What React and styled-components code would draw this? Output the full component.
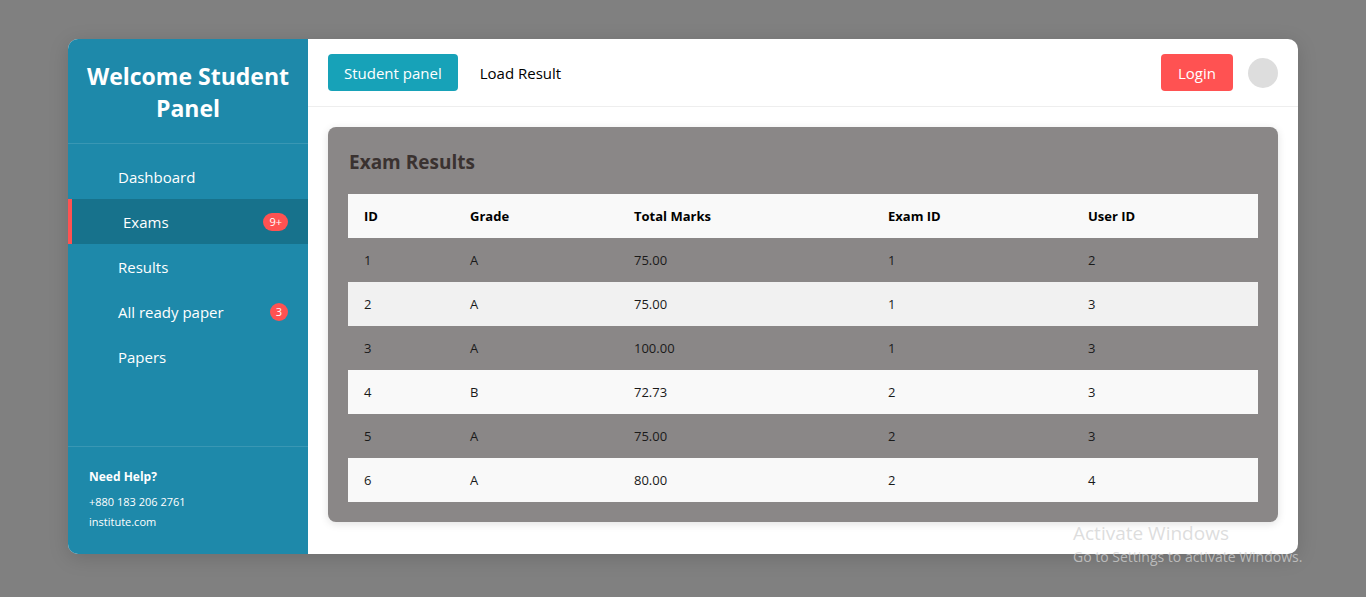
import React from 'react';
import styled, { createGlobalStyle } from 'styled-components';

const GlobalStyle = createGlobalStyle`
  * { box-sizing: border-box; }
  body {
    margin: 0;
    background: #808080;
    font-family: "Open Sans", "Noto Sans", sans-serif;
  }
`;

const Page = styled.div`
  position: relative;
  height: 597px;
  padding: 39px 68px 0;
`;

const Card = styled.div`
  display: flex;
  height: 515px;
  border-radius: 10px;
  overflow: hidden;
  background: #fff;
  box-shadow: 0 4px 20px rgba(0, 0, 0, 0.15);
`;

const Sidebar = styled.aside`
  display: flex;
  flex-direction: column;
  width: 240px;
  background: #1e89aa;
  color: #fff;
`;

const Title = styled.h1`
  margin: 0;
  padding: 21px 16px 19px;
  font-size: 23px;
  line-height: 32px;
  font-weight: 700;
  text-align: center;
  border-bottom: 1px solid rgba(255, 255, 255, 0.12);
`;

const Menu = styled.nav`
  display: flex;
  flex-direction: column;
  padding-top: 10px;
  flex: 1;
`;

const MenuItem = styled.div`
  display: flex;
  align-items: center;
  justify-content: space-between;
  height: 45px;
  padding: 0 20px 0 ${p => (p.$active ? '51px' : '50px')};
  font-size: 15px;
  background: ${p => (p.$active ? '#17728c' : 'transparent')};
  border-left: ${p => (p.$active ? '4px solid #ff5252' : '0')};
`;

const Badge = styled.span`
  display: inline-flex;
  align-items: center;
  justify-content: center;
  min-width: 18px;
  height: 18px;
  padding: 0 6px;
  border-radius: 9px;
  background: #ff5252;
  font-size: 11px;
  color: #fff;
`;

const Help = styled.div`
  padding: 20px 20px 22px 21px;
  border-top: 1px solid rgba(255, 255, 255, 0.12);
  font-size: 11px;
  line-height: 20px;
`;

const HelpTitle = styled.div`
  font-size: 12px;
  font-weight: 700;
  margin-bottom: 5px;
`;

const Main = styled.main`
  flex: 1;
  display: flex;
  flex-direction: column;
`;

const Header = styled.header`
  display: flex;
  align-items: center;
  height: 68px;
  padding: 0 20px;
  border-bottom: 1px solid #eeeeee;
`;

const NavButton = styled.button`
  height: 37px;
  padding: 0 16px;
  border: 0;
  border-radius: 4px;
  font-family: inherit;
  font-size: 15px;
  color: ${p => (p.$primary ? '#fff' : '#000')};
  background: ${p => (p.$primary ? '#17a2b8' : 'transparent')};
  margin-right: 6px;
`;

const Spacer = styled.div`
  flex: 1;
`;

const LoginButton = styled.button`
  height: 37px;
  width: 72px;
  border: 0;
  border-radius: 4px;
  background: #ff5252;
  color: #fff;
  font-family: inherit;
  font-size: 15px;
`;

const Avatar = styled.div`
  width: 30px;
  height: 30px;
  margin-left: 15px;
  border-radius: 50%;
  background: #dddddd;
`;

const Content = styled.section`
  padding: 20px;
`;

const Panel = styled.div`
  padding: 20px;
  border-radius: 8px;
  background: #8a8787;
  box-shadow: 0 2px 8px rgba(0, 0, 0, 0.12);
`;

const PanelTitle = styled.h2`
  margin: 0 0 20px 1px;
  height: 27px;
  font-size: 19px;
  font-weight: 700;
  color: #3a3230;
  line-height: 30px;
`;

const Table = styled.table`
  width: 100%;
  border-collapse: collapse;
  font-size: 13px;
  color: #1a1a1a;
`;

const Row = styled.tr`
  height: 44px;
  background: ${p => p.$bg || 'transparent'};
`;

const Th = styled.th`
  text-align: left;
  font-weight: 700;
  padding: 0 16px;
  color: #000;
`;

const Td = styled.td`
  padding: 0 16px;
`;

const Watermark = styled.div`
  position: absolute;
  left: 1073px;
  top: 521px;
  color: rgba(210, 210, 210, 0.75);
  font-family: "Open Sans", sans-serif;
  pointer-events: none;
`;

const WatermarkTitle = styled.div`
  font-size: 19px;
  line-height: 25px;
`;

const WatermarkSub = styled.div`
  font-size: 14px;
  line-height: 22px;
`;

const rows = [
  ['1', 'A', '75.00', '1', '2'],
  ['2', 'A', '75.00', '1', '3'],
  ['3', 'A', '100.00', '1', '3'],
  ['4', 'B', '72.73', '2', '3'],
  ['5', 'A', '75.00', '2', '3'],
  ['6', 'A', '80.00', '2', '4'],
];

const rowBg = [null, '#f1f1f1', null, '#f9f9f9', null, '#f9f9f9'];
const widths = [106, 164, 254, 200, 186];

export default function App() {
  return (
    <Page>
      <GlobalStyle />
      <Card>
        <Sidebar>
          <Title>Welcome Student Panel</Title>
          <Menu>
            <MenuItem>Dashboard</MenuItem>
            <MenuItem $active>Exams<Badge>9+</Badge></MenuItem>
            <MenuItem>Results</MenuItem>
            <MenuItem>All ready paper<Badge>3</Badge></MenuItem>
            <MenuItem>Papers</MenuItem>
          </Menu>
          <Help>
            <HelpTitle>Need Help?</HelpTitle>
            <div>+880 183 206 2761</div>
            <div>institute.com</div>
          </Help>
        </Sidebar>
        <Main>
          <Header>
            <NavButton $primary>Student panel</NavButton>
            <NavButton>Load Result</NavButton>
            <Spacer />
            <LoginButton>Login</LoginButton>
            <Avatar />
          </Header>
          <Content>
            <Panel>
              <PanelTitle>Exam Results</PanelTitle>
              <Table>
                <thead>
                  <Row $bg="#f9f9f9">
                    {['ID', 'Grade', 'Total Marks', 'Exam ID', 'User ID'].map((h, i) => (
                      <Th key={h} style={{ width: widths[i] }}>{h}</Th>
                    ))}
                  </Row>
                </thead>
                <tbody>
                  {rows.map((r, i) => (
                    <Row key={i} $bg={rowBg[i]}>
                      {r.map((c, j) => <Td key={j}>{c}</Td>)}
                    </Row>
                  ))}
                </tbody>
              </Table>
            </Panel>
          </Content>
        </Main>
      </Card>
      <Watermark>
        <WatermarkTitle>Activate Windows</WatermarkTitle>
        <WatermarkSub>Go to Settings to activate Windows.</WatermarkSub>
      </Watermark>
    </Page>
  );
}
